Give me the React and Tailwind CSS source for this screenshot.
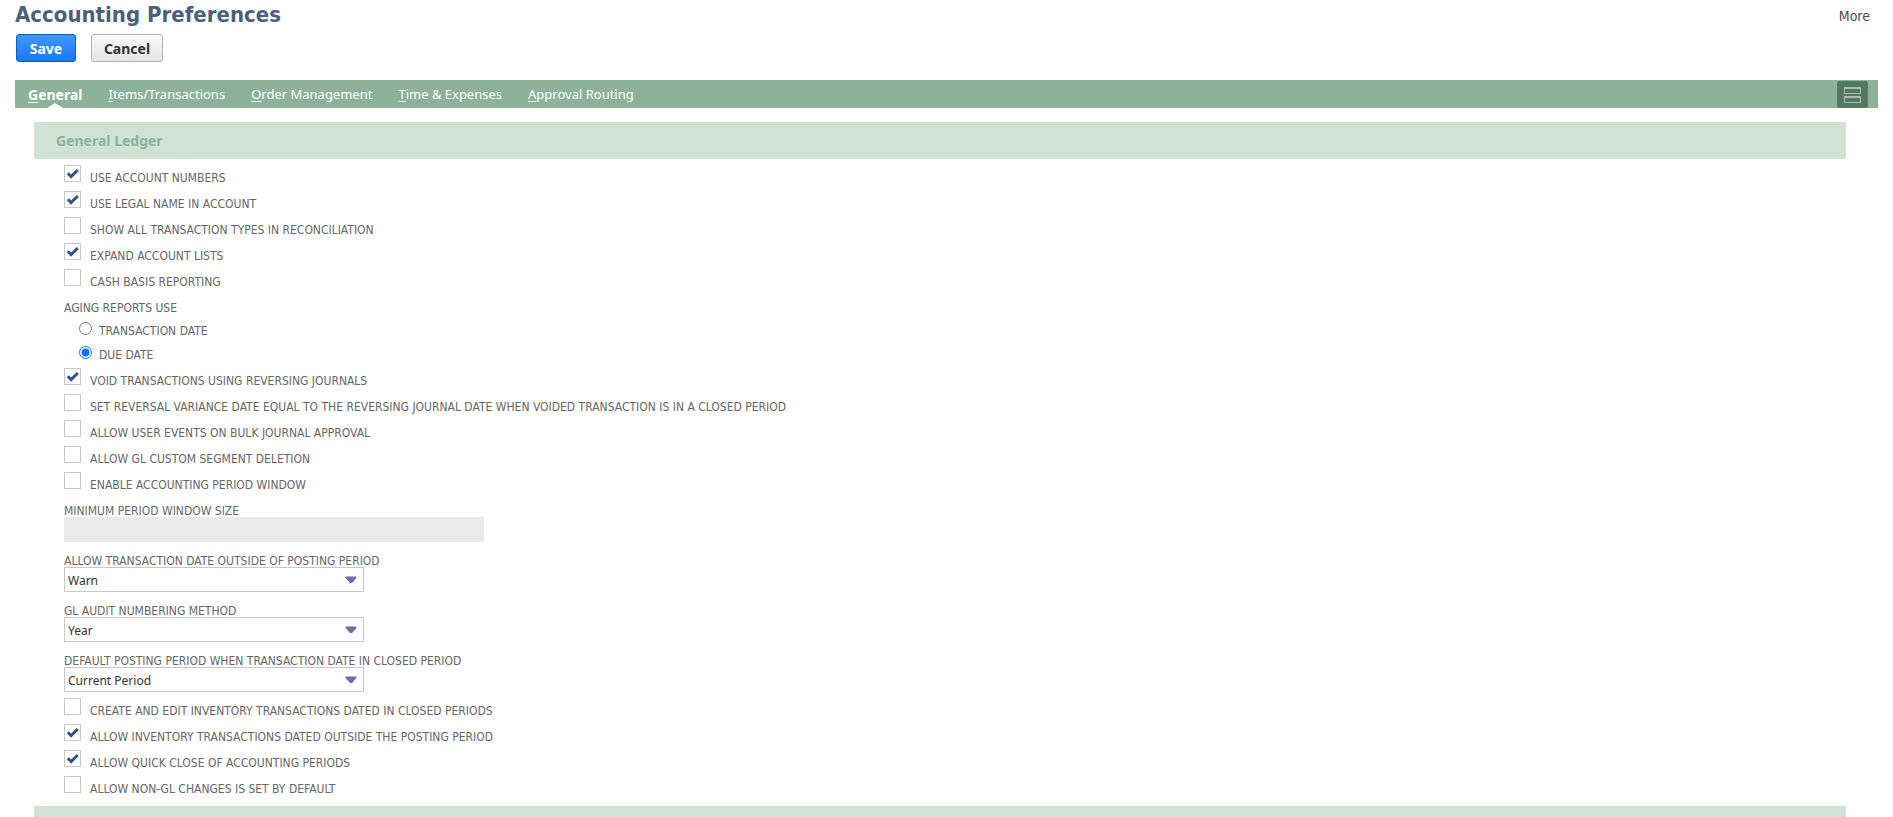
import { useState } from "react";

const tabs = [
  "General",
  "Items/Transactions",
  "Order Management",
  "Time & Expenses",
  "Approval Routing",
];

function Check({ id, label, checked = false }) {
  return (
    <div className="flex h-[26px] items-start gap-[9px]">
      <span className="grid size-[17px] shrink-0">
        <input
          id={id}
          type="checkbox"
          defaultChecked={checked}
          className="peer col-start-1 row-start-1 size-[17px] appearance-none border border-[#c8c8c8] bg-white"
        />
        <svg
          viewBox="0 0 17 17"
          className="pointer-events-none col-start-1 row-start-1 hidden size-[17px] peer-checked:block"
          aria-hidden="true"
        >
          <path d="M3.8 8.2 L7.1 11.6 L13.8 5" fill="none" stroke="#31548e" strokeWidth="3" />
        </svg>
      </span>
      <label htmlFor={id} className="pt-[5px] leading-[17px]">
        {label}
      </label>
    </div>
  );
}

function Field({ id, label, children }) {
  return (
    <div className="flex flex-col items-start pb-1.5">
      <label htmlFor={id} className="h-[19px] pt-[5px] leading-[17px]">
        {label}
      </label>
      {children}
    </div>
  );
}

function Choice({ id, label, options }) {
  return (
    <Field id={id} label={label}>
      <div className="grid w-[300px] max-w-full items-center">
        <select
          id={id}
          className="col-start-1 row-start-1 h-[25px] w-full appearance-none border border-[#c8c8c8] bg-white pt-0.5 pl-[3px] font-['Noto_Sans',sans-serif] text-[12px] text-[#333333]"
        >
          {options.map((o) => (
            <option key={o}>{o}</option>
          ))}
        </select>
        <svg
          viewBox="0 0 12 8"
          className="pointer-events-none col-start-1 row-start-1 mr-[7px] h-2 w-3 justify-self-end"
          aria-hidden="true"
        >
          <path d="M1.2 0.5 H10.8 Q12 0.7 11.4 1.9 L7.6 6.4 Q6 7.8 4.4 6.4 L0.6 1.9 Q0 0.7 1.2 0.5 Z" fill="#6c70a3" />
        </svg>
      </div>
    </Field>
  );
}

function Radio({ id, label, checked = false }) {
  return (
    <div className="flex h-6 items-start gap-[7px] pl-[15px]">
      <input
        id={id}
        type="radio"
        name="aging"
        defaultChecked={checked}
        className="mt-[5px] size-[13px] accent-[#0d76f5]"
      />
      <label htmlFor={id} className="pt-1.5 leading-[17px]">
        {label}
      </label>
    </div>
  );
}

export default function App() {
  const [active, setActive] = useState("General");
  return (
    <div className="bg-white px-[15px] font-['DejaVu_Sans_Condensed','DejaVu_Sans',sans-serif] text-[12px] text-[#666666]">
      <header className="flex items-start justify-between pr-2">
        <h1 className="h-[34px] text-[22px] leading-[30px] font-bold text-[#4d5f79]">
          Accounting Preferences
        </h1>
        <a href="#more" className="pt-[7px] text-[14px] leading-[18px] text-[#4d4d4d]">
          More
        </a>
      </header>

      <div className="flex gap-[15px] pb-[18px] pl-px font-['Noto_Sans',sans-serif]">
        <button
          type="button"
          className="h-7 w-[60px] rounded-[3px] border border-[#125ab2] bg-linear-to-b from-[#4297ff] to-[#1478f5] text-[14px] font-bold text-white"
        >
          Save
        </button>
        <button
          type="button"
          className="h-7 w-[72px] rounded-[3px] border border-[#b2b2b2] bg-linear-to-b from-[#fafafa] to-[#e5e5e5] text-[14px] font-bold text-[#333333]"
        >
          Cancel
        </button>
      </div>

      <nav className="flex h-7 items-end justify-between bg-[#8cb39a] pr-2.5 pl-[13px] font-['Noto_Sans',sans-serif]">
        <div className="flex h-7 gap-[26px]">
          {tabs.map((t) => (
            <button
              key={t}
              type="button"
              onClick={() => setActive(t)}
              className={
                t === active
                  ? "relative h-7 text-[14px] font-bold text-white"
                  : "relative h-7 pt-0.5 text-[13px] text-white"
              }
            >
              <span className="underline underline-offset-2">{t[0]}</span>
              {t.slice(1)}
              {t === active && (
                <svg
                  viewBox="0 0 16 5"
                  className="absolute bottom-0 left-1/2 h-[5px] w-4 -translate-x-1/2"
                  aria-hidden="true"
                >
                  <path d="M0 5 L8 0 L16 5 Z" fill="#ffffff" />
                </svg>
              )}
            </button>
          ))}
        </div>
        <button
          type="button"
          aria-label="Unlayer tabs"
          className="grid h-[27px] w-[31px] place-items-center rounded-[2px] border border-[#66796c] bg-[#4d7a60]"
        >
          <svg viewBox="0 0 17 16" className="h-4 w-[17px]" aria-hidden="true">
            <path
              d="M0 0 H17 V7 H0 Z M1 2 V6 H16 V2 Z M0 9 H17 V16 H0 Z M1 11 V15 H16 V11 Z"
              fill="#b8b8b0"
              fillRule="evenodd"
            />
          </svg>
        </button>
      </nav>

      <main className="pt-3.5 pr-8 pl-[19px]">
        <h2 className="flex h-[37px] items-center bg-[#d0e1d6] pl-[22px] font-['Noto_Sans',sans-serif] text-[14px] font-bold text-[#8cb39a]">
          General Ledger
        </h2>
        <form className="px-[30px] pt-1.5 pb-1">
          <Check id="numbers" label="USE ACCOUNT NUMBERS" checked />
          <Check id="legal" label="USE LEGAL NAME IN ACCOUNT" checked />
          <Check id="types" label="SHOW ALL TRANSACTION TYPES IN RECONCILIATION" />
          <Check id="expand" label="EXPAND ACCOUNT LISTS" checked />
          <Check id="cash" label="CASH BASIS REPORTING" />
          <fieldset className="pb-[3px]">
            <legend className="h-[22px] pt-[5px] leading-[17px]">AGING REPORTS USE</legend>
            <Radio id="trandate" label="TRANSACTION DATE" />
            <Radio id="duedate" label="DUE DATE" checked />
          </fieldset>
          <Check id="void" label="VOID TRANSACTIONS USING REVERSING JOURNALS" checked />
          <Check
            id="variance"
            label="SET REVERSAL VARIANCE DATE EQUAL TO THE REVERSING JOURNAL DATE WHEN VOIDED TRANSACTION IS IN A CLOSED PERIOD"
          />
          <Check id="events" label="ALLOW USER EVENTS ON BULK JOURNAL APPROVAL" />
          <Check id="segment" label="ALLOW GL CUSTOM SEGMENT DELETION" />
          <Check id="window" label="ENABLE ACCOUNTING PERIOD WINDOW" />
          <Field id="minsize" label="MINIMUM PERIOD WINDOW SIZE">
            <input id="minsize" type="text" disabled className="h-[25px] w-[420px] max-w-full bg-[#eaeaea] px-1" />
          </Field>
          <Choice
            id="outside"
            label="ALLOW TRANSACTION DATE OUTSIDE OF POSTING PERIOD"
            options={["Warn", "Allow", "Disallow"]}
          />
          <Choice id="audit" label="GL AUDIT NUMBERING METHOD" options={["Year", "Period"]} />
          <Choice
            id="posting"
            label="DEFAULT POSTING PERIOD WHEN TRANSACTION DATE IN CLOSED PERIOD"
            options={["Current Period", "First Open Period"]}
          />
          <Check id="create" label="CREATE AND EDIT INVENTORY TRANSACTIONS DATED IN CLOSED PERIODS" />
          <Check id="inventory" label="ALLOW INVENTORY TRANSACTIONS DATED OUTSIDE THE POSTING PERIOD" checked />
          <Check id="quick" label="ALLOW QUICK CLOSE OF ACCOUNTING PERIODS" checked />
          <Check id="nongl" label="ALLOW NON-GL CHANGES IS SET BY DEFAULT" />
        </form>
        <div className="h-[11px] bg-[#d0e1d6]" />
      </main>
    </div>
  );
}
